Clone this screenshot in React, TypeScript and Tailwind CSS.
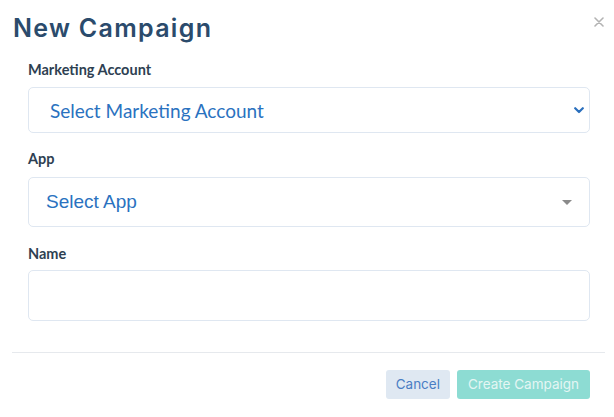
import React from 'react'

const Chevron = () => (
  <svg width="10" height="7" viewBox="0 0 10 7" fill="none">
    <path d="M1.2 1.2 L5 5 L8.8 1.2" stroke="#2a6fbd" strokeWidth="2.2" strokeLinecap="round" strokeLinejoin="round" />
  </svg>
)

const Caret = () => (
  <svg width="10" height="5" viewBox="0 0 10 5">
    <path d="M0 0 L10 0 L5 5 Z" fill="#8a8a8a" />
  </svg>
)

const CloseIcon = () => (
  <svg width="10" height="10" viewBox="0 0 10 10">
    <path d="M1 1 L9 9 M9 1 L1 9" stroke="#b3b3b3" strokeWidth="1.6" strokeLinecap="round" />
  </svg>
)

const App: React.FC = () => {
  return (
    <div className="w-[614px] h-[417px] bg-white overflow-hidden">
      <div className="flex items-start justify-between pl-[13px] pr-[10px] pt-[10px]">
        <h2 className="font-['Inter',sans-serif] font-semibold text-[25px] tracking-[1.3px] leading-[36px] text-[#2b4b6c]">
          New Campaign
        </h2>
        <button className="mt-[7px]">
          <CloseIcon />
        </button>
      </div>

      <div className="pl-[28px] pr-[24px] pt-[14px] font-['Lato',sans-serif]">
        <label className="block text-[14.5px] leading-[20px] font-bold text-[#2e3f52] mb-[7px]">
          Marketing Account
        </label>
        <div className="h-[46px] flex items-center justify-between border border-[#dfe7f1] rounded-[5px] pl-[21px] pr-[5px]">
          <span className="pt-[3px] text-[19px] text-[#2a72c0]">Select Marketing Account</span>
          <Chevron />
        </div>

        <label className="block text-[14.5px] leading-[20px] font-bold text-[#2e3f52] mt-[16px] mb-[8px]">
          App
        </label>
        <div className="h-[50px] flex items-center justify-between border border-[#dfe7f1] rounded-[5px] pl-[17px] pr-[17px]">
          <span className="font-['Liberation_Sans',sans-serif] text-[19px] text-[#2a72c0]">Select App</span>
          <Caret />
        </div>

        <label className="block text-[14.5px] leading-[20px] font-bold text-[#2e3f52] mt-[17px] mb-[6px]">
          Name
        </label>
        <div className="h-[51px] border border-[#dfe7f1] rounded-[5px]" />
      </div>

      <div className="ml-[12px] mr-[9px] mt-[31px] border-t border-[#e6e9ed]" />

      <div className="flex justify-end gap-[7px] pr-[24px] pt-[17px] font-['Inter',sans-serif] text-[13.5px]">
        <button className="h-[29px] px-[10px] rounded-[3px] bg-[#dfe8f2] text-[#4a7ec4]">Cancel</button>
        <button className="h-[29px] px-[11px] rounded-[3px] bg-[#8ddcd3] text-[#e4f6f3]">Create Campaign</button>
      </div>
    </div>
  )
}

export default App
